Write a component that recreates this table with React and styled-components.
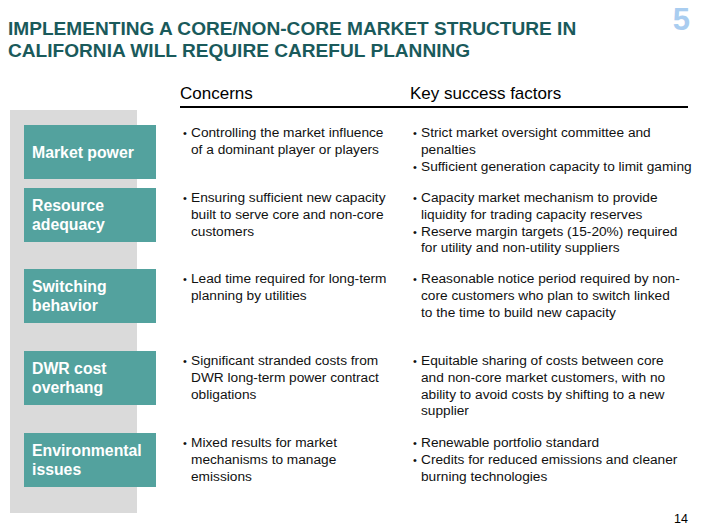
import styled, {createGlobalStyle} from 'styled-components'

const GlobalStyle = createGlobalStyle`
  html, body {
    margin: 0;
    padding: 0;
    background: #ffffff;
  }
  body {
    font-family: "Liberation Sans", Arial, sans-serif;
    color: #000000;
  }
`;

// each bullet is a list of its lines, broken as on the slide
const rows = [
    {
        label: ['Market power'],
        concerns: [['Controlling the market influence', 'of a dominant player or players']],
        factors: [
            ['Strict market oversight committee and', 'penalties'],
            ['Sufficient generation capacity to limit gaming'],
        ],
    },
    {
        label: ['Resource', 'adequacy'],
        concerns: [['Ensuring sufficient new capacity', 'built to serve core and non-core', 'customers']],
        factors: [
            ['Capacity market mechanism to provide', 'liquidity for trading capacity reserves'],
            ['Reserve margin targets (15-20%) required', 'for utility and non-utility suppliers'],
        ],
    },
    {
        label: ['Switching', 'behavior'],
        concerns: [['Lead time required for long-term', 'planning by utilities']],
        factors: [
            ['Reasonable notice period required by non-', 'core customers who plan to switch linked', 'to the time to build new capacity'],
        ],
    },
    {
        label: ['DWR cost', 'overhang'],
        concerns: [['Significant stranded costs from', 'DWR long-term power contract', 'obligations']],
        factors: [
            ['Equitable sharing of costs between core', 'and non-core market customers, with no', 'ability to avoid costs by shifting to a new', 'supplier'],
        ],
    },
    {
        label: ['Environmental', 'issues'],
        concerns: [['Mixed results for market', 'mechanisms to manage', 'emissions']],
        factors: [
            ['Renewable portfolio standard'],
            ['Credits for reduced emissions and cleaner', 'burning technologies'],
        ],
    },
];

function Bullets({items, wide, first}){
    return(
        <Cell wide={wide} first={first}>
            {items.map(lines=>(
                <Item key={lines[0]}>
                    <Bullet>•</Bullet>
                    <span>{lines.map(l=>(<Line key={l}>{l}</Line>))}</span>
                </Item>
            ))}
        </Cell>
    )
}

export default function App(){
    return(
        <>
            <GlobalStyle/>
            <Page>
                <Header>
                    <Title>
                        IMPLEMENTING A CORE/NON-CORE MARKET STRUCTURE IN<br/>
                        CALIFORNIA WILL REQUIRE CAREFUL PLANNING
                    </Title>
                    <SlideNo>5</SlideNo>
                </Header>
                <Heads>
                    <Head width={230}>Concerns</Head>
                    <Head>Key success factors</Head>
                </Heads>
                <Table>
                    <Panel/>
                    {
                        rows.map((row, i)=>(
                            <Row key={i} index={i}>
                                <Label>
                                    {row.label.map(l=>(<div key={l}>{l}</div>))}
                                </Label>
                                <Bullets items={row.concerns} first={i === 0}/>
                                <Bullets items={row.factors} first={i === 0} wide/>
                            </Row>
                        ))
                    }
                </Table>
                <PageNo>14</PageNo>
            </Page>
        </>
    )
}

const Page = styled.div`
  width: 706px;
  height: 529px;
  overflow: hidden;
  padding-top: 18px;
  box-sizing: border-box;
`;

const Header = styled.div`
  display: flex;
  justify-content: space-between;
  align-items: flex-start;
  padding: 0 16px 0 8px;
`;

const Title = styled.h1`
  margin: 0;
  font-size: 19.1px;
  line-height: 22px;
  font-weight: bold;
  color: #1a5a5b;
`;

const SlideNo = styled.div`
  margin-top: -14px;
  font-size: 31px;
  line-height: 31px;
  font-weight: bold;
  color: #a9cdf0;
`;

const Heads = styled.div`
  display: flex;
  margin: 22px 0 0 180px;
  width: 508px;
  padding-bottom: 2px;
  border-bottom: 2px solid #000000;
`;

const Head = styled.div`
  width: ${p=>p.width ? `${p.width}px` : 'auto'};
  font-size: 17px;
  line-height: 20px;
`;

const Table = styled.div`
  display: grid;
  margin: 2px 0 0 10px;
  grid-template-columns: 173px 230px 283px;
  grid-template-rows: 15px 63px 81px 82px 82px 54px 26px;
`;

const Panel = styled.div`
  grid-column: 1;
  grid-row: 1 / -1;
  width: 127px;
  background: #dadada;
`;

const Row = styled.div`
  display: contents;
  & > * {
    grid-row: ${p=>p.index + 2};
  }
`;

const Label = styled.div`
  grid-column: 1;
  margin-left: 14px;
  width: 132px;
  height: 54px;
  box-sizing: border-box;
  padding-left: 8px;
  display: flex;
  flex-direction: column;
  justify-content: center;
  background: #53a29e;
  color: #ffffff;
  font-weight: bold;
  font-size: 15.8px;
  line-height: 19px;
`;

const Cell = styled.div`
  grid-column: ${p=>p.wide ? 3 : 2};
  margin-top: ${p=>p.first ? 0 : 2}px;
  font-size: 13.7px;
  line-height: 16.8px;
  color: #111111;
`;

const Item = styled.div`
  display: flex;
`;

const Bullet = styled.span`
  flex: 0 0 8px;
  font-size: 11px;
`;

const Line = styled.span`
  display: block;
  white-space: nowrap;
`;

const PageNo = styled.div`
  margin-top: -1px;
  padding-right: 18px;
  text-align: right;
  font-size: 12.5px;
  line-height: 14px;
`;
